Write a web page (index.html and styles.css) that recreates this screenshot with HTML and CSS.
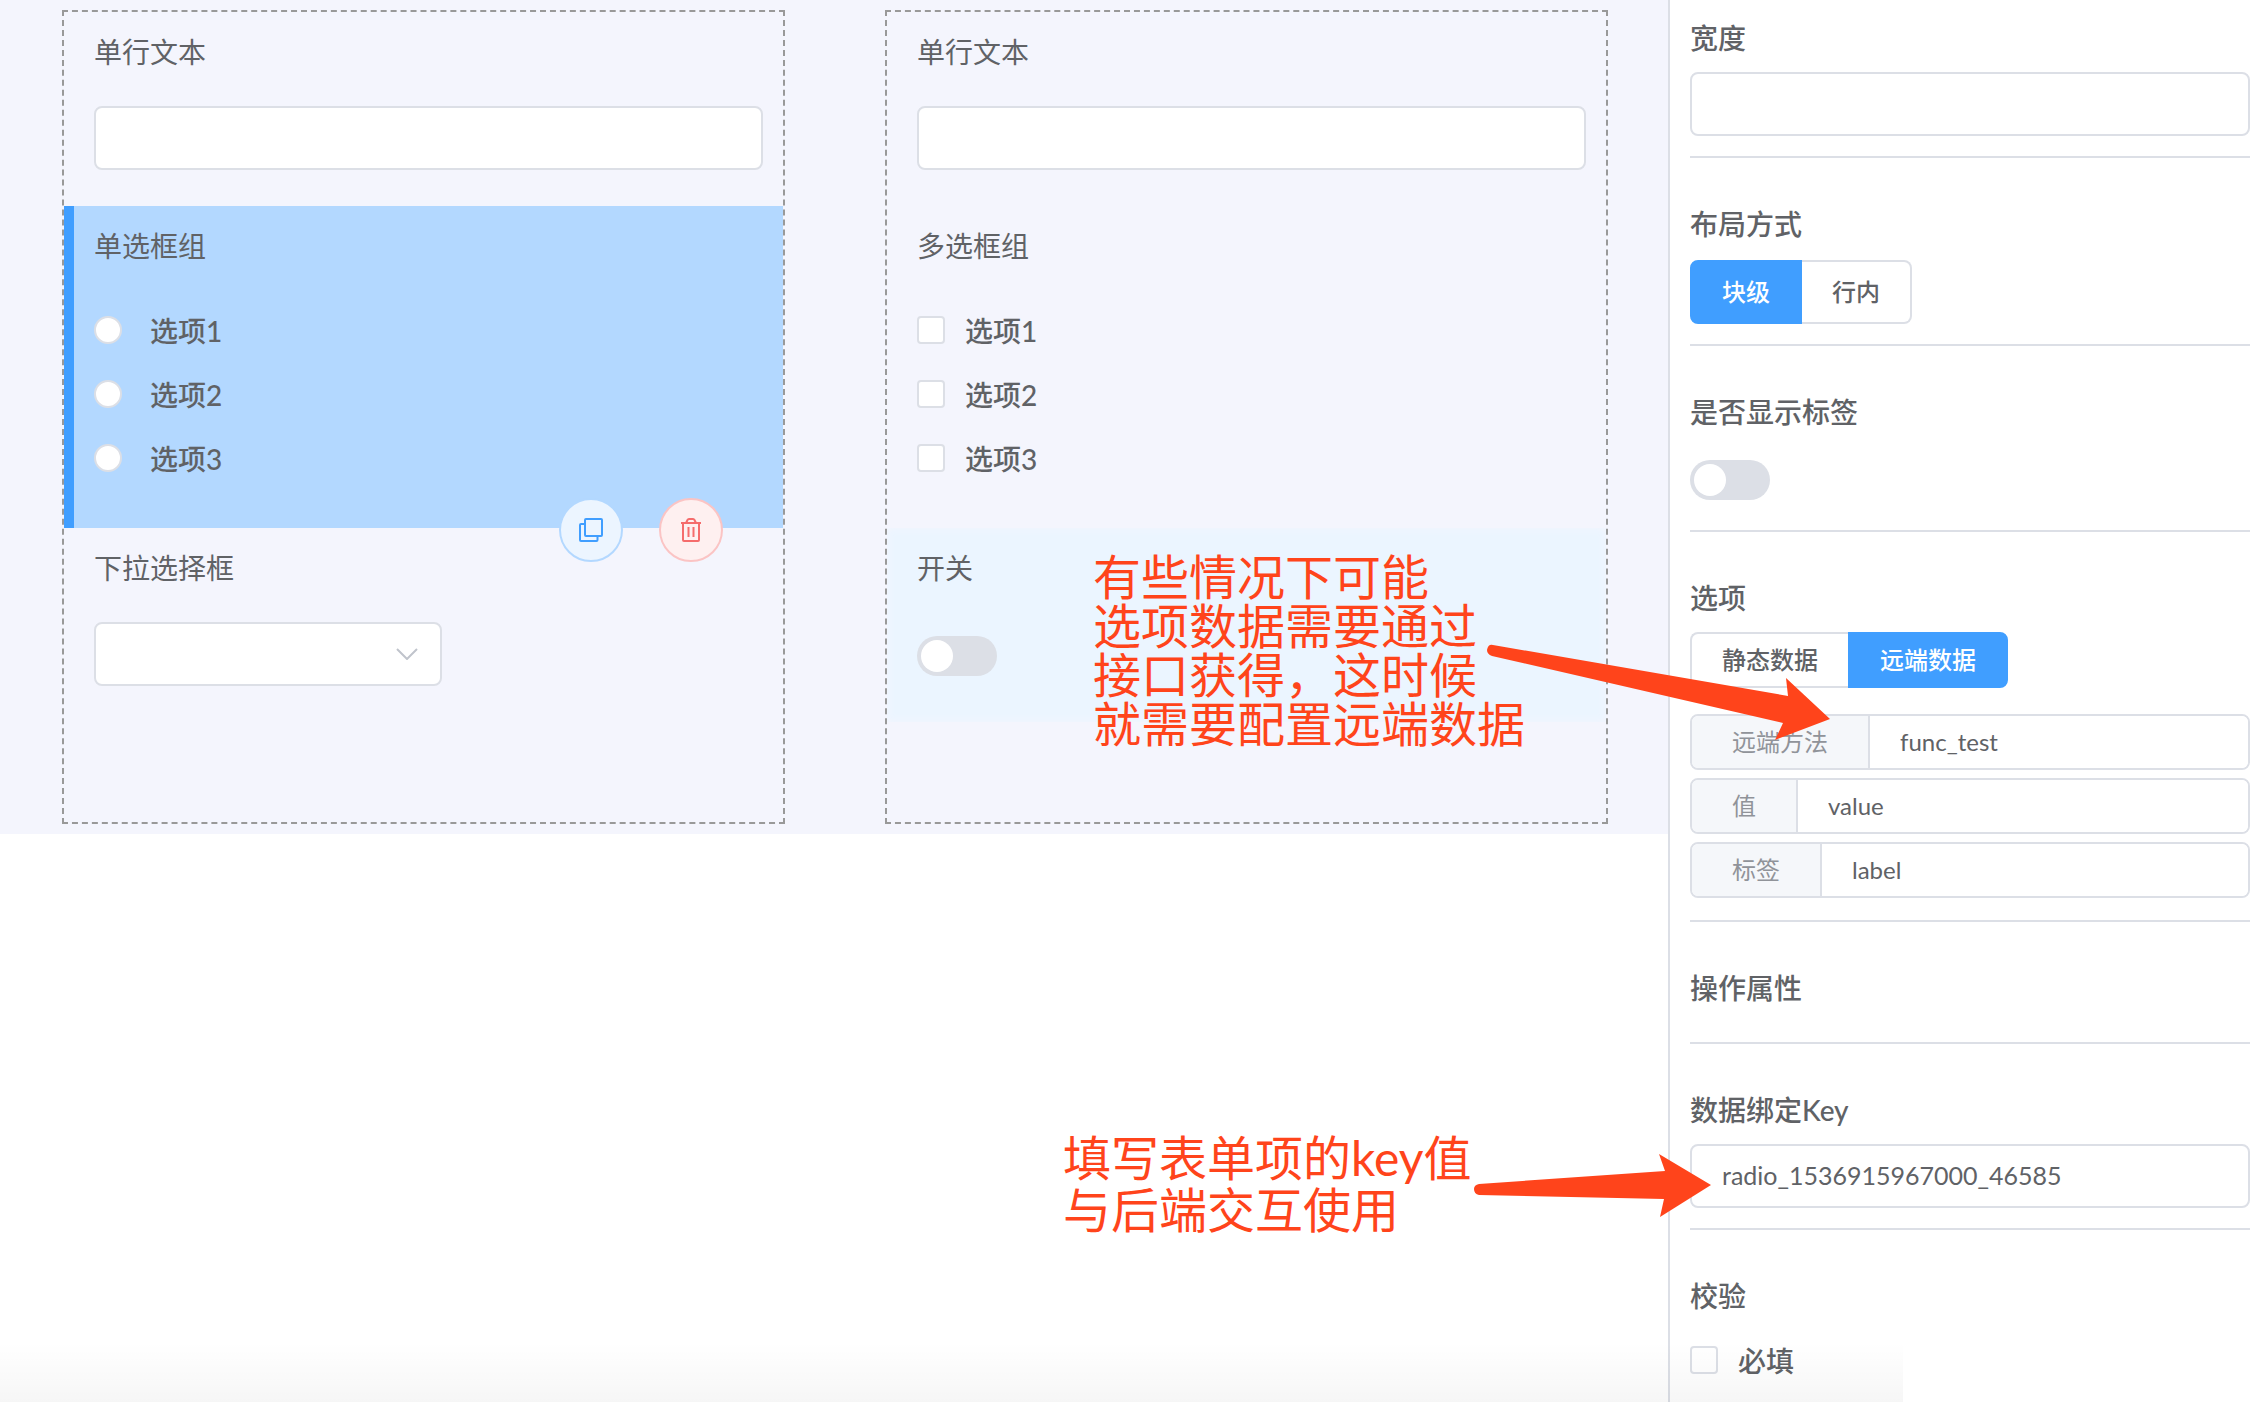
FILE: index.html
```
<!DOCTYPE html>
<html lang="zh-CN">
<head>
    <meta charset="UTF-8">
    <meta name="viewport" content="width=device-width, initial-scale=1.0">
    <title>表单设计器</title>
    <link rel="stylesheet" href="styles.css">
</head>
<body>
    <div class="page">
        <main class="workspace">
            <div class="canvas">
                <div class="column">
                    <div class="widget">
                        <label class="widget-label" for="text_left">单行文本</label>
                        <input class="input" type="text" id="text_left">
                    </div>

                    <div class="widget active">
                        <div class="widget-label" id="radio_title">单选框组</div>
                        <div class="options" role="radiogroup" aria-labelledby="radio_title">
                            <label class="option"><input type="radio" name="radio_group" value="1">选项1</label>
                            <label class="option"><input type="radio" name="radio_group" value="2">选项2</label>
                            <label class="option"><input type="radio" name="radio_group" value="3">选项3</label>
                        </div>
                        <div class="widget-actions">
                            <button type="button" class="circle-btn copy" aria-label="复制">
                                <svg viewBox="0 0 24 24" width="24" height="24">
                                    <rect x="6" y="1" width="17" height="17" rx="1"/>
                                    <path d="M6 6H2a1 1 0 0 0-1 1v15a1 1 0 0 0 1 1h15.500a1 1 0 0 0 1-1v-4"/>
                                </svg>
                            </button>
                            <button type="button" class="circle-btn delete" aria-label="删除">
                                <svg viewBox="0 0 24 24" width="24" height="24">
                                    <path d="M2 5h20M7 5l1.500-3q.4-1 1.500-1h4q1.100 0 1.500 1L17 5M4 5v17q0 1 1 1h14q1 0 1-1V5"/>
                                    <path d="M9.500 9v10M14.500 9v10"/>
                                </svg>
                            </button>
                        </div>
                    </div>

                    <div class="widget">
                        <label class="widget-label" for="select_left">下拉选择框</label>
                        <div class="select">
                            <select id="select_left">
                                <option value=""></option>
                            </select>
                            <svg viewBox="0 0 22 12" width="22" height="12"><path d="M1 1l10 10L21 1"/></svg>
                        </div>
                    </div>
                </div>

                <div class="column">
                    <div class="widget">
                        <label class="widget-label" for="text_right">单行文本</label>
                        <input class="input" type="text" id="text_right">
                    </div>

                    <div class="widget">
                        <div class="widget-label" id="checkbox_title">多选框组</div>
                        <div class="options" role="group" aria-labelledby="checkbox_title">
                            <label class="option"><input type="checkbox" value="1">选项1</label>
                            <label class="option"><input type="checkbox" value="2">选项2</label>
                            <label class="option"><input type="checkbox" value="3">选项3</label>
                        </div>
                    </div>

                    <div class="widget hovered">
                        <label class="widget-label" for="switch_right">开关</label>
                        <div class="switch-row">
                            <input class="switch" type="checkbox" id="switch_right">
                        </div>
                    </div>
                </div>
            </div>
        </main>

        <aside class="config">
            <section class="config-item">
                <label class="config-label" for="width">宽度</label>
                <input class="input" type="text" id="width">
            </section>

            <section class="config-item">
                <div class="config-label">布局方式</div>
                <div class="segmented large">
                    <input type="radio" id="block" name="layout" checked>
                    <label for="block">块级</label>
                    <input type="radio" id="inline" name="layout">
                    <label for="inline">行内</label>
                </div>
            </section>

            <section class="config-item">
                <label class="config-label" for="show_label">是否显示标签</label>
                <div class="switch-row">
                    <input class="switch" type="checkbox" id="show_label">
                </div>
            </section>

            <section class="config-item">
                <div class="config-label">选项</div>
                <div class="segmented">
                    <input type="radio" id="static" name="source">
                    <label for="static">静态数据</label>
                    <input type="radio" id="remote" name="source" checked>
                    <label for="remote">远端数据</label>
                </div>
                <div class="remote-fields">
                    <div class="input-group">
                        <label for="remote_func">远端方法</label>
                        <input type="text" id="remote_func" value="func_test">
                    </div>
                    <div class="input-group">
                        <label for="remote_value">值</label>
                        <input type="text" id="remote_value" value="value">
                    </div>
                    <div class="input-group">
                        <label for="remote_label">标签</label>
                        <input type="text" id="remote_label" value="label">
                    </div>
                </div>
            </section>

            <section class="config-item">
                <div class="config-label">操作属性</div>
            </section>

            <section class="config-item">
                <label class="config-label" for="model_key">数据绑定Key</label>
                <input class="input" type="text" id="model_key" value="radio_1536915967000_46585">
            </section>

            <section class="config-item">
                <div class="config-label">校验</div>
                <label class="option"><input type="checkbox">必填</label>
            </section>
        </aside>

        <!-- notes and arrows over the page -->
        <svg class="arrows" width="2266" height="1402" viewBox="0 0 2266 1402">
            <path d="M1493 645L1788 696L1786 678L1830 719L1775 740L1783 723L1492 656Q1487 654 1487 650Q1488 644 1493 645Z"/>
            <path d="M1479 1184L1665 1171L1659 1154L1711 1185L1660 1217L1664 1199L1479 1195Q1474 1194 1474 1189Q1474 1185 1479 1184Z"/>
        </svg>
        <p class="note note-remote">有些情况下可能<br>选项数据需要通过<br>接口获得，这时候<br>就需要配置远端数据</p>
        <p class="note note-key">填写表单项的key值<br>与后端交互使用</p>
    </div>
</body>
</html>
```
FILE: styles.css
```
* {
    margin: 0;
    padding: 0;
    box-sizing: border-box;
}

body {
    font-family: Lato, "Noto Sans CJK SC", sans-serif;
    font-size: 28px;
    color: #606266;
    background: #fff;
}

input, select, button {
    font-family: inherit;
    color: inherit;
}

.page {
    position: relative;
    display: flex;
    min-height: 100vh;
    overflow: hidden;
}

/* soft shade along the bottom edge */
.page::after {
    content: "";
    position: absolute;
    left: 0;
    bottom: 0;
    width: 84%;
    height: 60px;
    background: linear-gradient(rgba(0, 0, 0, 0), rgba(0, 0, 0, 0.035));
    pointer-events: none;
}

.workspace {
    flex: 1;
}

/* form canvas */
.canvas {
    display: grid;
    grid-template-columns: 1fr 1fr;
    gap: 100px;
    padding: 10px 60px 10px 62px;
    background: #f4f5fd;
}

.column {
    min-height: 814px;
    border: 2px dashed #999;
}

.widget {
    position: relative;
    padding: 0 20px 36px 30px;
}

.widget.active {
    background: #b3d8ff;
    box-shadow: inset 10px 0 0 #409eff;
}

.widget.hovered {
    background: #ebf5ff;
    box-shadow: inset 0 0 8px #f4f5fd;
}

.widget-label {
    display: block;
    line-height: 80px;
    margin-bottom: 14px;
}

.input {
    display: block;
    width: 100%;
    height: 64px;
    padding: 0 30px 2px;
    border: 2px solid #dcdfe6;
    border-radius: 8px;
    background: #fff;
    font-size: 25px;
}

.options {
    display: flex;
    flex-direction: column;
    gap: 4px;
    padding-bottom: 4px;
}

.option {
    display: flex;
    align-items: center;
    gap: 20px;
    height: 60px;
    font-weight: 500;
}

.option input {
    appearance: none;
    width: 28px;
    height: 28px;
    border: 2px solid #dcdfe6;
    border-radius: 4px;
    background: #fff;
}

.option input[type="radio"] {
    border-radius: 50%;
    margin-right: 8px;
}

.select {
    position: relative;
    width: 348px;
}

.select select {
    appearance: none;
    display: block;
    width: 100%;
    height: 64px;
    border: 2px solid #dcdfe6;
    border-radius: 8px;
    background: #fff;
    font-size: 24px;
}

.select svg {
    position: absolute;
    top: 26px;
    right: 24px;
    fill: none;
    stroke: #c0c4cc;
    stroke-width: 2;
    pointer-events: none;
}

.widget-actions {
    position: absolute;
    right: 60px;
    bottom: -34px;
    z-index: 1;
    display: flex;
    gap: 36px;
}

.circle-btn {
    display: flex;
    align-items: center;
    justify-content: center;
    width: 64px;
    height: 64px;
    border: 2px solid;
    border-radius: 50%;
}

.circle-btn svg {
    fill: none;
    stroke-width: 2;
}

.copy {
    background: #ecf5ff;
    border-color: #b3d8ff;
}

.copy svg {
    stroke: #409eff;
}

.delete {
    background: #fef0f0;
    border-color: #fbc4c4;
}

.delete svg {
    stroke: #f56c6c;
}

.switch-row {
    padding: 14px 0 10px;
}

.switch {
    appearance: none;
    display: block;
    width: 80px;
    height: 40px;
    padding: 4px;
    border-radius: 20px;
    background: #dcdfe6;
}

.switch::before {
    content: "";
    display: block;
    width: 32px;
    height: 32px;
    border-radius: 50%;
    background: #fff;
}

.switch:checked {
    background: #409eff;
}

.switch:checked::before {
    margin-left: auto;
}

/* settings panel */
.config {
    flex: 0 0 598px;
    padding: 20px 16px 0 20px;
    border-left: 2px solid #dcdfe6;
    background: #fff;
}

.config-item {
    padding-bottom: 20px;
    margin-bottom: 48px;
    border-bottom: 2px solid #dcdfe6;
}

.config-item:last-child {
    padding-bottom: 0;
    margin-bottom: 0;
    border-bottom: none;
}

.config-label {
    display: block;
    line-height: 36px;
    margin-bottom: 16px;
    font-weight: 500;
}

.segmented {
    display: flex;
    font-size: 24px;
    font-weight: 500;
}

.segmented input {
    position: absolute;
    opacity: 0;
}

.segmented label {
    padding: 0 30px;
    line-height: 52px;
    border: 2px solid #dcdfe6;
    cursor: pointer;
}

.segmented.large {
    padding-top: 2px;
}

.segmented.large label {
    line-height: 60px;
}

.segmented label:first-of-type {
    border-right: none;
    border-radius: 8px 0 0 8px;
}

.segmented label:last-of-type {
    border-left: none;
    border-radius: 0 8px 8px 0;
}

.segmented input:checked + label {
    border: 2px solid #409eff;
    background: #409eff;
    color: #fff;
}

.remote-fields {
    display: flex;
    flex-direction: column;
    gap: 8px;
    padding: 26px 0 2px;
}

.input-group {
    display: flex;
    height: 56px;
    border: 2px solid #dcdfe6;
    border-radius: 8px;
    overflow: hidden;
    font-size: 24px;
}

.input-group label {
    padding: 0 40px;
    line-height: 52px;
    border-right: 2px solid #dcdfe6;
    background: #f5f7fa;
    color: #909399;
}

.input-group input {
    flex: 1;
    min-width: 0;
    padding: 0 30px 2px;
    border: none;
    font-size: 24px;
}

/* notes */
.arrows {
    position: absolute;
    top: 0;
    left: 0;
    fill: #ff441b;
    pointer-events: none;
}

.note {
    position: absolute;
    color: #ff441b;
    font-size: 48px;
    white-space: nowrap;
}

.note-remote {
    top: 552px;
    left: 1093px;
    line-height: 49px;
}

.note-key {
    top: 1132px;
    left: 1063px;
    line-height: 52px;
}
```
